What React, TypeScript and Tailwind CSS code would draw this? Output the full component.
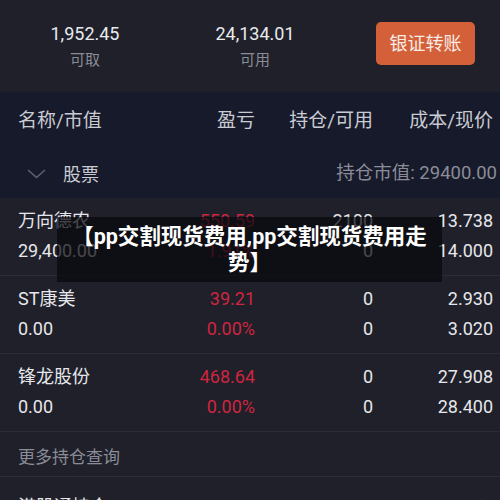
import React from "react";

const font = { fontFamily: 'Roboto, "Noto Sans CJK SC", "Noto Sans", sans-serif' };

type Row = { name: string; mv: string; pnl: string; pct: string; hold: string; avail: string; cost: string; price: string };

const rows: Row[] = [
  { name: "万向德农", mv: "29,400.00", pnl: "550.59", pct: "1.91%", hold: "2100", avail: "0", cost: "13.738", price: "14.000" },
  { name: "ST康美", mv: "0.00", pnl: "39.21", pct: "0.00%", hold: "0", avail: "0", cost: "2.930", price: "3.020" },
  { name: "锋龙股份", mv: "0.00", pnl: "468.64", pct: "0.00%", hold: "0", avail: "0", cost: "27.908", price: "28.400" },
];

export default function App() {
  return (
    <div className="relative w-[500px] h-[500px] overflow-hidden bg-[#1f2029]" style={font}>
      {/* top summary */}
      <div className="flex h-[92px] bg-[#1f2029] items-center">
        <div className="w-[170px] flex flex-col items-center">
          <div className="text-[18px] leading-[24px] text-[#e9eaee]">1,952.45</div>
          <div className="text-[15px] leading-[22px] mt-[3px] text-[#8a8c97]">可取</div>
        </div>
        <div className="w-[170px] flex flex-col items-center">
          <div className="text-[18px] leading-[24px] text-[#e9eaee]">24,134.01</div>
          <div className="text-[15px] leading-[22px] mt-[3px] text-[#8a8c97]">可用</div>
        </div>
        <div className="flex-1 flex justify-end pr-[25px] pb-[6px]">
          <div className="w-[99px] h-[43px] rounded-[5px] bg-[#d4603a] flex items-center justify-center text-[18px] text-[#f8ece6]">
            银证转账
          </div>
        </div>
      </div>

      {/* header section */}
      <div className="bg-[#171a2a]">
        <div className="flex items-center h-[58px] pl-[18px] pr-[7px] text-[19px] text-[#c9cbd3]">
          <div className="w-[117px]">名称/市值</div>
          <div className="w-[120px] text-right">盈亏</div>
          <div className="w-[118px] text-right">持仓/可用</div>
          <div className="w-[120px] text-right">成本/现价</div>
        </div>
        <div className="flex items-center h-[48px] pl-[27px] pr-[3px]">
          <svg width="19" height="10" viewBox="0 0 19 10" className="mr-[17px]">
            <path d="M1 1 L9.5 8.5 L18 1" stroke="#5d6072" strokeWidth="1.6" fill="none" />
          </svg>
          <div className="text-[18px] text-[#c9cbd3]">股票</div>
          <div className="flex-1 text-right text-[18.5px] text-[#8a8c98]">持仓市值: 29400.00</div>
        </div>
      </div>

      {/* rows */}
      <div className="bg-[#1f2029]">
        {rows.map((r) => (
          <div key={r.name} className="h-[78px] border-b border-[#2a2c37] pt-[8px] pl-[18px] pr-[7px] flex flex-col gap-[2px] text-[18px]">
            <div className="flex h-[28px] items-center">
              <div className="w-[117px] text-[#e6e7ec]">{r.name}</div>
              <div className="w-[120px] text-right text-[#cf2540]">{r.pnl}</div>
              <div className="w-[118px] text-right text-[#e6e7ec]">{r.hold}</div>
              <div className="w-[120px] text-right text-[#e6e7ec]">{r.cost}</div>
            </div>
            <div className="flex h-[28px] items-center">
              <div className="w-[117px] text-[#e6e7ec]">{r.mv}</div>
              <div className="w-[120px] text-right text-[#cf2540]">{r.pct}</div>
              <div className="w-[118px] text-right text-[#e6e7ec]">{r.avail}</div>
              <div className="w-[120px] text-right text-[#e6e7ec]">{r.price}</div>
            </div>
          </div>
        ))}
        <div className="h-[45px] border-b border-[#2a2c37] pl-[18px] pt-[10px] text-[17px] leading-[30px] text-[#8a8c98]">
          更多持仓查询
        </div>
        <div className="h-[45px] pl-[18px] pr-[10px] pt-[14px] flex items-center justify-between text-[18px] text-[#e6e7ec]">
          <div>港股通持仓</div>
          <svg width="10" height="16" viewBox="0 0 10 16">
            <path d="M1.5 1 L8.5 8 L1.5 15" stroke="#6a6c78" strokeWidth="1.6" fill="none" />
          </svg>
        </div>
      </div>

      {/* overlay */}
      <div className="absolute left-[57px] top-[217px] w-[385px] h-[65px] bg-[rgba(8,8,12,0.72)] flex items-center justify-center">
        <div className="text-center text-[21.5px] leading-[26px] font-bold text-white">
          【pp交割现货费用,pp交割现货费用走
          <br />
          势】
        </div>
      </div>
    </div>
  );
}
